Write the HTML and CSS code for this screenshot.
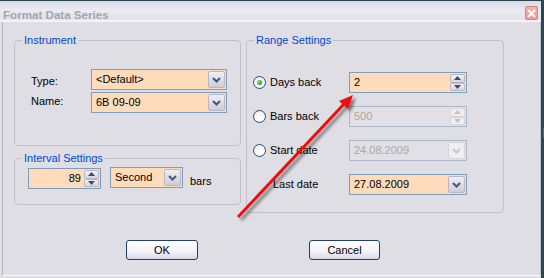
FILE: index.html
```html
<!DOCTYPE html>
<html lang="en">
<head>
    <meta charset="UTF-8">
    <meta name="viewport" content="width=device-width, initial-scale=1.0">
    <title>Format Data Series</title>
    <link rel="stylesheet" href="styles.css">
</head>
<body>
    <div class="window">
        <div class="titlebar">
            <span class="title">Format Data Series</span>
            <span class="close-btn">
                <svg width="9" height="9" viewBox="0 0 9 9"><path d="M1 1L8 8M8 1L1 8" stroke="#fff" stroke-width="2" fill="none"/></svg>
            </span>
        </div>

        <div class="dialog">
            <div class="groups">
                <div class="left-col">
                    <div class="group instrument">
                        <div class="group-title">Instrument</div>
                        <div class="form-grid">
                            <div class="field-row">
                                <span class="field-label label-type">Type:</span>
                                <div class="combo combo-wide">
                                    <span class="combo-text">&lt;Default&gt;</span>
                                    <span class="drop-btn"><svg width="9" height="6" viewBox="0 0 9 6"><polyline points="1,1 4.5,4.5 8,1" stroke="#4b5573" stroke-width="2" fill="none"/></svg></span>
                                </div>
                            </div>
                            <div class="field-row">
                                <span class="field-label label-name">Name:</span>
                                <div class="combo combo-wide">
                                    <span class="combo-text">6B 09-09</span>
                                    <span class="drop-btn"><svg width="9" height="6" viewBox="0 0 9 6"><polyline points="1,1 4.5,4.5 8,1" stroke="#4b5573" stroke-width="2" fill="none"/></svg></span>
                                </div>
                            </div>
                        </div>
                    </div>

                    <div class="group interval">
                        <div class="group-title">Interval Settings</div>
                        <div class="interval-row">
                            <div class="combo num-input">
                                <span class="combo-text num-text">89</span>
                                <span class="spin">
                                    <span class="spin-btn"><svg width="7" height="4" viewBox="0 0 7 4"><polygon points="0,4 3.5,0 7,4" fill="#3c4a66"/></svg></span>
                                    <span class="spin-btn"><svg width="7" height="4" viewBox="0 0 7 4"><polygon points="0,0 3.5,4 7,0" fill="#3c4a66"/></svg></span>
                                </span>
                            </div>
                            <div class="combo combo-short">
                                <span class="combo-text">Second</span>
                                <span class="drop-btn"><svg width="9" height="6" viewBox="0 0 9 6"><polyline points="1,1 4.5,4.5 8,1" stroke="#4b5573" stroke-width="2" fill="none"/></svg></span>
                            </div>
                            <span class="bars-label">bars</span>
                        </div>
                    </div>
                </div>

                <div class="group range">
                    <div class="group-title">Range Settings</div>
                    <div class="range-rows">
                        <div class="range-row">
                            <span class="radio-label"><span class="radio checked"></span>Days back</span>
                            <div class="combo range-input">
                                <span class="combo-text">2</span>
                                <span class="spin">
                                    <span class="spin-btn"><svg width="7" height="4" viewBox="0 0 7 4"><polygon points="0,4 3.5,0 7,4" fill="#3c4a66"/></svg></span>
                                    <span class="spin-btn"><svg width="7" height="4" viewBox="0 0 7 4"><polygon points="0,0 3.5,4 7,0" fill="#3c4a66"/></svg></span>
                                </span>
                            </div>
                        </div>
                        <div class="range-row">
                            <span class="radio-label"><span class="radio"></span>Bars back</span>
                            <div class="combo range-input disabled">
                                <span class="combo-text">500</span>
                                <span class="spin">
                                    <span class="spin-btn"><svg width="7" height="4" viewBox="0 0 7 4"><polygon points="0,4 3.5,0 7,4" fill="#c4c3bc"/></svg></span>
                                    <span class="spin-btn"><svg width="7" height="4" viewBox="0 0 7 4"><polygon points="0,0 3.5,4 7,0" fill="#c4c3bc"/></svg></span>
                                </span>
                            </div>
                        </div>
                        <div class="range-row">
                            <span class="radio-label"><span class="radio"></span>Start date</span>
                            <div class="combo range-input disabled">
                                <span class="combo-text">24.08.2009</span>
                                <span class="drop-btn"><svg width="9" height="6" viewBox="0 0 9 6"><polyline points="1,1 4.5,4.5 8,1" stroke="#c9c8c2" stroke-width="2" fill="none"/></svg></span>
                            </div>
                        </div>
                        <div class="range-row">
                            <span class="radio-label last-label">Last date</span>
                            <div class="combo range-input">
                                <span class="combo-text">27.08.2009</span>
                                <span class="drop-btn"><svg width="9" height="6" viewBox="0 0 9 6"><polyline points="1,1 4.5,4.5 8,1" stroke="#4b5573" stroke-width="2" fill="none"/></svg></span>
                            </div>
                        </div>
                    </div>
                </div>
            </div>

            <div class="button-row">
                <button class="btn btn-ok">OK</button>
                <button class="btn btn-cancel">Cancel</button>
            </div>
        </div>
    </div>
    <div class="edge-mark"></div>

    <svg class="arrow" width="544" height="278" viewBox="0 0 544 278">
        <defs>
            <filter id="shadow" x="-20%" y="-20%" width="140%" height="140%">
                <feDropShadow dx="3" dy="3" stdDeviation="1.5" flood-color="#000" flood-opacity="0.45"/>
            </filter>
        </defs>
        <g filter="url(#shadow)">
            <line x1="238" y1="217" x2="345" y2="103" stroke="#ee1010" stroke-width="3"/>
            <polygon points="353,95 339,101 348,109" fill="#ee1010"/>
        </g>
    </svg>
</body>
</html>
```

FILE: styles.css
```css
body, html {
    margin: 0;
    padding: 0;
    height: 100%;
    background: #2a4650;
    font-family: "Liberation Sans", Arial, sans-serif;
    font-size: 11px;
    color: #000;
    overflow: hidden;
}
.window {
    position: relative;
    width: 541px;
    height: 277px;
    margin-top: 1px;
    background: #dfdee4;
    display: flex;
    flex-direction: column;
}
.titlebar {
    height: 21px;
    display: flex;
    align-items: flex-start;
    justify-content: space-between;
    padding: 0 3px;
    background: linear-gradient(#d9d9e4, #ebebf2 45%, #e2e2ea 85%, #f8f8fb);
}
.title {
    margin-top: 7px;
    font-size: 11.6px;
    font-weight: bold;
    line-height: 13px;
    color: #a3a4ae;
}
.close-btn {
    width: 13px;
    height: 14px;
    margin-top: 5px;
    box-sizing: border-box;
    border: 1px solid #d8807c;
    border-radius: 2px;
    background: linear-gradient(#f6b4ae, #ee9690);
    display: flex;
    justify-content: center;
    align-items: center;
}
.dialog {
    flex: 1;
    margin: 0 0 2px 2px;
    padding: 18px 0 0 11px;
    border-left: 1px solid #b4b3bc;
    border-right: 1px solid #c4c3cc;
    border-bottom: 1px solid #fbfbfd;
}
.groups {
    display: flex;
    align-items: flex-start;
    gap: 5px;
}
.left-col {
    width: 227px;
    display: flex;
    flex-direction: column;
    gap: 12px;
}
.group {
    box-sizing: border-box;
    border: 1px solid #c1c0c8;
    border-radius: 4px;
}
.instrument { height: 106px; }
.interval { height: 47px; }
.range { width: 258px; height: 173px; }
.group-title {
    width: fit-content;
    margin: -7px 0 0 7px;
    padding: 0 2px;
    line-height: 13px;
    background: #dfdee4;
    color: #0046d5;
}
.form-grid {
    display: flex;
    flex-direction: column;
    gap: 2px;
    margin-top: 22px;
    padding-left: 16px;
}
.field-row {
    display: flex;
    align-items: flex-start;
}
.field-label {
    width: 60px;
    line-height: 13px;
}
.label-type { padding-top: 6px; }
.label-name { padding-top: 3px; }

.combo {
    box-sizing: border-box;
    height: 21px;
    padding: 1px;
    display: flex;
    align-items: stretch;
    border: 1px solid #7f9db9;
    background: #fedbbb;
}
.combo-text {
    flex: 1;
    padding-left: 3px;
    line-height: 17px;
    white-space: nowrap;
}
.combo-wide { width: 136px; }
.combo-short { width: 73px; margin-left: 9px; }
.drop-btn {
    width: 17px;
    box-sizing: border-box;
    border: 1px solid #b7b6c6;
    border-radius: 2px;
    background: linear-gradient(#eeeef4, #cdccda);
    display: flex;
    justify-content: center;
    align-items: center;
}
.spin {
    width: 15px;
    display: flex;
    flex-direction: column;
}
.spin-btn {
    flex: 1;
    box-sizing: border-box;
    border: 1px solid #b7b6c6;
    border-radius: 2px;
    background: linear-gradient(#f2f2f6, #d6d5e0);
    display: flex;
    justify-content: center;
    align-items: center;
}
.interval-row {
    display: flex;
    align-items: flex-start;
    margin-top: 2px;
    padding-left: 13px;
}
.num-input {
    width: 73px;
    margin-top: 1px;
}
.num-text {
    text-align: right;
    padding-right: 3px;
}
.bars-label {
    margin-left: 7px;
    padding-top: 8px;
    line-height: 13px;
}

.range-rows {
    display: flex;
    flex-direction: column;
    gap: 13px;
    margin-top: 25px;
    padding-left: 6px;
}
.range-row {
    display: flex;
    align-items: center;
    height: 21px;
}
.radio-label {
    width: 96px;
    display: flex;
    align-items: center;
    gap: 4px;
    line-height: 13px;
}
.last-label { padding-left: 20px; box-sizing: border-box; }
.radio {
    width: 13px;
    height: 13px;
    box-sizing: border-box;
    border: 1px solid #1c5180;
    border-radius: 50%;
    background: radial-gradient(circle at 60% 65%, #fff 20%, #e4e2dc 100%);
    display: flex;
    justify-content: center;
    align-items: center;
}
.radio.checked::after {
    content: "";
    width: 5px;
    height: 5px;
    border-radius: 50%;
    background: radial-gradient(circle at 35% 35%, #8fe08f, #21a121 70%);
}
.range-input { width: 118px; }
.range-input.disabled {
    background: #e1e0e6;
    border-color: #a9b7c9;
    color: #aca899;
}
.range-input.disabled .drop-btn,
.range-input.disabled .spin-btn {
    background: #efeff2;
    border-color: #d6d5dc;
}

.button-row {
    display: flex;
    gap: 111px;
    margin: 27px 0 0 112px;
}
.btn {
    height: 20px;
    padding: 0;
    box-sizing: border-box;
    border: 1px solid #1f3e6e;
    border-radius: 3px;
    background: linear-gradient(#ffffff, #f2f2f6 60%, #d8d7e4);
    font-family: "Liberation Sans", Arial, sans-serif;
    font-size: 11px;
    color: #000;
}
.btn-ok { width: 72px; }
.btn-cancel { width: 71px; }

/* stray magenta pixels of the window behind, at the right edge */
.edge-mark {
    position: absolute;
    top: 128px;
    left: 543px;
    width: 1px;
    height: 10px;
    background: #e010e0;
}
.arrow {
    position: absolute;
    top: 0;
    left: 0;
    pointer-events: none;
}
```
